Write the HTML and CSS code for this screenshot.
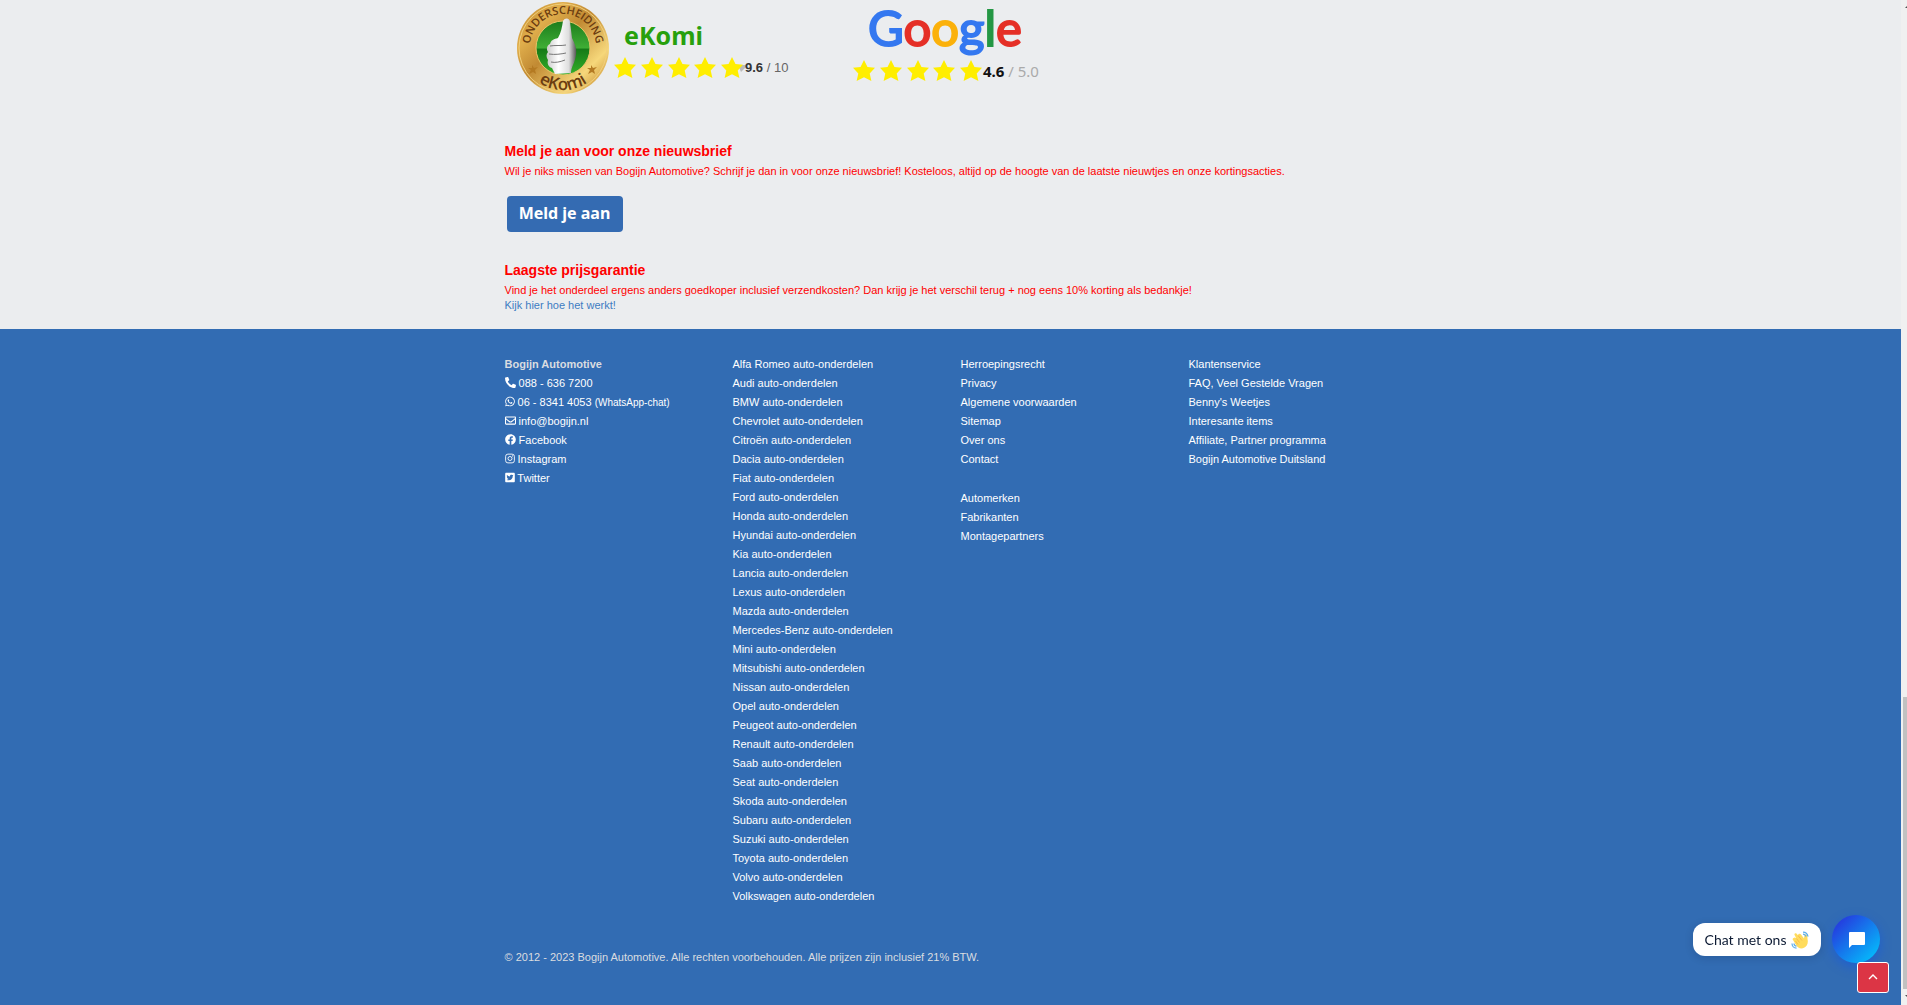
FILE: index.html
```html
<!DOCTYPE html>
<html lang="nl">
<head>
<meta charset="utf-8">
<title>Bogijn Automotive</title>
<link rel="stylesheet" href="styles.css">
</head>
<body>
<svg class="defs" aria-hidden="true">
  <defs>
    <g id="stars" fill="#ffee00">
      <path id="star" d="M11 0l3.500 7 7.500.800-5.300 5.600 1.700 7.600-7.400-3.700-7.400 3.700 1.700-7.600L0 7.800l7.500-.8z"/>
      <use href="#star" x="27"/><use href="#star" x="54"/><use href="#star" x="80"/><use href="#star" x="107"/>
    </g>
  </defs>
</svg>
<div class="page">
  <main class="intro container">
    <div class="ratings">
      <svg class="rating" width="300" height="100" viewBox="0 0 300 100" role="img" aria-label="eKomi 9.6 / 10">
        <defs>
          <linearGradient id="gold" x1="0" y1="0" x2="1" y2="1">
            <stop offset="0" stop-color="#b98228"/><stop offset=".25" stop-color="#e0ae4c"/><stop offset=".45" stop-color="#c18a33"/><stop offset=".75" stop-color="#f6d77a"/><stop offset="1" stop-color="#b9771c"/>
          </linearGradient>
          <linearGradient id="green" x1="0" y1="0" x2="0" y2="1">
            <stop offset="0" stop-color="#1c7c1c"/><stop offset=".5" stop-color="#3fae35"/><stop offset=".52" stop-color="#157a17"/><stop offset="1" stop-color="#34b02a"/>
          </linearGradient>
          <linearGradient id="hand" x1="0" y1="0" x2="1" y2="0">
            <stop offset="0" stop-color="#c9c9c9"/><stop offset=".4" stop-color="#fff"/><stop offset=".75" stop-color="#ddd"/><stop offset="1" stop-color="#555"/>
          </linearGradient>
          <path id="arc-top" d="M25 47A33 33 0 0 1 91 47"/>
          <path id="arc-bottom" d="M15 47A43 43 0 0 0 101 47"/>
        </defs>
        <circle cx="58" cy="48" r="46" fill="url(#gold)"/>
        <circle cx="58" cy="48" r="44" fill="none" stroke="#f1cf7c"/>
        <circle cx="58" cy="48" r="27" fill="url(#green)" stroke="#e9c468"/>
        <path d="M53 38c3-5 4-11 5-17 2-4 7-3 7 1l2 16c3 6 5 11 4 17-1 8-5 12-5 18l-16 1-3-6c-4-1-5-5-4-8-2-3-2-6 0-8-2-3-1-7 2-8 1-4 4-5 8-6z" fill="url(#hand)"/>
        <path d="M45 46c5-1 11 0 16-1M44 54c6 1 12 0 17-1M46 62c4 1 9 0 14-2" fill="none" stroke="#777"/>
        <text class="seal-text" font-size="11" text-anchor="middle"><textPath href="#arc-top" startOffset="50%">ONDERSCHEIDING</textPath></text>
        <text class="seal-text" font-size="17" text-anchor="middle"><textPath href="#arc-bottom" startOffset="50%">eKomi</textPath></text>
        <path d="M27 65l2 3 4-1-3 3 1 4-3-2-4 2 2-4-3-2h4zM86 65l2 3 4-1-3 3 1 4-3-2-4 2 2-4-3-2h4z" fill="#b47a22"/>
        <text class="ekomi" x="119" y="45">eKomi</text>
        <path d="M233 65h10l-7 7z" fill="#bbb"/>
        <use href="#stars" x="109" y="57"/>
        <text class="score" x="240" y="72"><tspan class="strong">9.6</tspan> / 10</text>
      </svg>
      <svg class="rating" width="220" height="100" viewBox="0 0 220 100" role="img" aria-label="Google 4.6 / 5.0">
        <text class="google" x="27" y="46"><tspan class="blue">G</tspan><tspan class="red">o</tspan><tspan class="yellow">o</tspan><tspan class="blue">g</tspan><tspan class="green">l</tspan><tspan class="red">e</tspan></text>
        <path d="M130 68h9l-7 7z" fill="#bbb"/>
        <use href="#stars" x="12" y="60"/>
        <text class="score-google" x="142" y="77"><tspan class="strong">4.6</tspan> / 5.0</text>
      </svg>
    </div>
    <section class="promo">
      <h2>Meld je aan voor onze nieuwsbrief</h2>
      <p>Wil je niks missen van Bogijn Automotive? Schrijf je dan in voor onze nieuwsbrief! Kosteloos, altijd op de hoogte van de laatste nieuwtjes en onze kortingsacties.</p>
      <button class="signup" type="button">Meld je aan</button>
    </section>
    <section class="promo">
      <h2>Laagste prijsgarantie</h2>
      <p>Vind je het onderdeel ergens anders goedkoper inclusief verzendkosten? Dan krijg je het verschil terug + nog eens 10% korting als bedankje!</p>
      <a class="how" href="#">Kijk hier hoe het werkt!</a>
    </section>
  </main>
  <footer class="footer">
    <div class="container">
      <div class="columns">
        <ul>
          <li class="brand">Bogijn Automotive</li>
          <li><a href="#"><svg class="icon wide" viewBox="0 0 512 512"><path d="M493 25l-104-24c-11-3-23 3-27 14l-48 112c-4 10-1 22 7 28l61 50c-36 76-98 140-177 177l-50-61c-7-8-18-11-28-7L15 362c-11 5-17 16-14 27l24 104c2 11 12 19 23 19 256 0 464-207 464-464 0-11-8-21-19-23z" transform="matrix(-1 0 0 1 512 0)"/></svg> 088 - 636 7200</a></li>
          <li><a href="#"><svg class="icon" viewBox="0 0 448 512"><path d="M381 97C339 55 283 32 224 32 102 32 2 131 2 254c0 39 10 77 30 111L0 480l118-31c32 18 69 27 106 27 122 0 224-99 224-222 0-59-25-115-67-157zM224 439c-33 0-66-9-94-26l-7-4-70 18 19-68-4-7c-19-29-29-63-29-98C39 152 122 69 224 69c49 0 96 19 130 54 35 35 57 81 56 131 0 102-84 185-186 185zm101-138c-6-3-33-16-38-18s-9-3-12 2c-4 6-15 19-18 22-3 4-6 4-12 2-33-17-54-30-76-67-6-10 6-9 16-31 2-4 1-7 0-9-1-3-12-31-17-42-5-10-9-9-12-9h-11c-4 0-10 1-15 7s-19 19-19 46 20 54 22 58c3 3 39 60 95 84 35 15 49 17 67 14 10-2 32-14 37-26 5-13 5-24 3-26-1-3-5-4-10-7z"/></svg> 06 - 8341 4053 <small>(WhatsApp-chat)</small></a></li>
          <li><a href="#"><svg class="icon wide" viewBox="0 0 512 512"><path d="M464 64H48C22 64 0 86 0 112v288c0 26 22 48 48 48h416c26 0 48-22 48-48V112c0-26-22-48-48-48zm0 48v41c-22 18-58 47-134 106-17 13-50 45-74 45s-57-32-74-45C106 200 70 171 48 153v-41zM48 400V214c23 18 55 44 105 83 22 17 60 55 103 55s80-37 103-55c50-39 82-65 105-83v186z"/></svg> info@bogijn.nl</a></li>
          <li><a href="#"><svg class="icon wide" viewBox="0 0 512 512"><path d="M504 256C504 119 393 8 256 8S8 119 8 256c0 124 91 226 209 245V328h-63v-72h63v-55c0-62 37-96 94-96 27 0 55 4 55 4v62h-31c-31 0-40 19-40 38v47h69l-11 72h-58v173c118-19 209-121 209-245z"/></svg> Facebook</a></li>
          <li><a href="#"><svg class="icon" viewBox="0 0 448 512"><g fill="none" stroke="currentColor" stroke-width="42"><rect x="21" y="53" width="406" height="406" rx="105"/><circle cx="224" cy="256" r="94"/></g><circle cx="343" cy="137" r="27"/></svg> Instagram</a></li>
          <li><a href="#"><svg class="icon" viewBox="0 0 448 512"><path fill-rule="evenodd" d="M400 32H48C22 32 0 54 0 80v352c0 26 22 48 48 48h352c26 0 48-22 48-48V80c0-26-22-48-48-48zm-49 159v8c0 87-66 187-187 187-37 0-72-11-101-29 36 4 71-7 97-28-29-1-53-20-61-46 10 1 20 1 30-1-31-6-53-33-53-66 9 5 19 8 30 9-30-21-38-59-21-89 33 40 81 66 136 69-9-45 25-81 64-81 19 0 36 8 48 21 15-3 29-8 42-16-5 15-16 29-29 36 13-1 26-5 38-10-9 13-20 25-33 34z"/></svg> Twitter</a></li>
        </ul>
        <ul>
          <li><a href="#">Alfa Romeo auto-onderdelen</a></li>
          <li><a href="#">Audi auto-onderdelen</a></li>
          <li><a href="#">BMW auto-onderdelen</a></li>
          <li><a href="#">Chevrolet auto-onderdelen</a></li>
          <li><a href="#">Citroën auto-onderdelen</a></li>
          <li><a href="#">Dacia auto-onderdelen</a></li>
          <li><a href="#">Fiat auto-onderdelen</a></li>
          <li><a href="#">Ford auto-onderdelen</a></li>
          <li><a href="#">Honda auto-onderdelen</a></li>
          <li><a href="#">Hyundai auto-onderdelen</a></li>
          <li><a href="#">Kia auto-onderdelen</a></li>
          <li><a href="#">Lancia auto-onderdelen</a></li>
          <li><a href="#">Lexus auto-onderdelen</a></li>
          <li><a href="#">Mazda auto-onderdelen</a></li>
          <li><a href="#">Mercedes-Benz auto-onderdelen</a></li>
          <li><a href="#">Mini auto-onderdelen</a></li>
          <li><a href="#">Mitsubishi auto-onderdelen</a></li>
          <li><a href="#">Nissan auto-onderdelen</a></li>
          <li><a href="#">Opel auto-onderdelen</a></li>
          <li><a href="#">Peugeot auto-onderdelen</a></li>
          <li><a href="#">Renault auto-onderdelen</a></li>
          <li><a href="#">Saab auto-onderdelen</a></li>
          <li><a href="#">Seat auto-onderdelen</a></li>
          <li><a href="#">Skoda auto-onderdelen</a></li>
          <li><a href="#">Subaru auto-onderdelen</a></li>
          <li><a href="#">Suzuki auto-onderdelen</a></li>
          <li><a href="#">Toyota auto-onderdelen</a></li>
          <li><a href="#">Volvo auto-onderdelen</a></li>
          <li><a href="#">Volkswagen auto-onderdelen</a></li>
        </ul>
        <div>
          <ul>
            <li><a href="#">Herroepingsrecht</a></li>
            <li><a href="#">Privacy</a></li>
            <li><a href="#">Algemene voorwaarden</a></li>
            <li><a href="#">Sitemap</a></li>
            <li><a href="#">Over ons</a></li>
            <li><a href="#">Contact</a></li>
          </ul>
          <ul class="second">
            <li><a href="#">Automerken</a></li>
            <li><a href="#">Fabrikanten</a></li>
            <li><a href="#">Montagepartners</a></li>
          </ul>
        </div>
        <ul>
          <li><a href="#">Klantenservice</a></li>
          <li><a href="#">FAQ, Veel Gestelde Vragen</a></li>
          <li><a href="#">Benny's Weetjes</a></li>
          <li><a href="#">Interesante items</a></li>
          <li><a href="#">Affiliate, Partner programma</a></li>
          <li><a href="#">Bogijn Automotive Duitsland</a></li>
        </ul>
      </div>
      <p class="copyright">© 2012 - 2023 Bogijn Automotive. Alle rechten voorbehouden. Alle prijzen zijn inclusief 21% BTW.</p>
    </div>
  </footer>
</div>
<div class="scrollbar" aria-hidden="true">
  <svg width="6" height="16"><path d="M4 8l2-2v2z" fill="#505050"/></svg>
  <div class="track"><div class="thumb"></div></div>
  <svg width="6" height="16"><path d="M4 6h2v2z" fill="#505050"/></svg>
</div>
<button class="chat-label" type="button">Chat met ons
  <svg width="18" height="18" viewBox="0 0 36 36"><path d="M5 14c2-2 4-1 6 1l-4-7c-1-3 3-5 5-2l2 3c0-4 4-5 6-2l6 8c1-4 0-7 3-8 4-1 4 4 4 9 2 8-1 14-6 17-7 4-13 1-17-5L4 18c-1-1-1-3 1-4z" fill="#ffdc5d"/><path d="M11 15l6 8M14 9l8 10M9 20l5 7" fill="none" stroke="#ef9645" stroke-width="1"/><path d="M24 2c5 0 9 4 10 9M24 6c3 0 5 2 6 5M2 25c0 5 4 9 9 9M6 25c0 3 2 5 5 5" fill="none" stroke="#5dadec" stroke-width="2.500"/></svg>
</button>
<button class="chat-open" type="button" aria-label="Open chat"><svg width="18" height="18" viewBox="0 0 18 18"><path d="M2 1h14a1 1 0 0 1 1 1v11a1 1 0 0 1-1 1H4l-3 3V2a1 1 0 0 1 1-1z" fill="#fff"/></svg></button>
<a class="to-top" href="#" aria-label="Naar boven"><svg width="10" height="8" viewBox="0 0 10 8"><path d="M1 6l4-4 4 4" fill="none" stroke="#fff" stroke-width="1.400"/></svg></a>
</body>
</html>
```
FILE: styles.css
```css
* { box-sizing: border-box; }
body {
  margin: 0;
  min-height: 100vh;
  display: flex;
  background: #ebedef;
  font: 11px/15px "Liberation Sans", Arial, sans-serif;
}
h2, p, ul { margin: 0; padding: 0; }
ul { list-style: none; }
a { color: inherit; text-decoration: none; }
button { border: 0; cursor: pointer; }
.defs { position: absolute; width: 0; height: 0; }
.page { flex: 1; display: flex; flex-direction: column; min-width: 0; }
.container { width: 100%; max-width: 912px; margin: 0 auto; padding: 0 10px; }

.ratings { display: flex; gap: 36px; padding-bottom: 41px; }
.rating { display: block; overflow: visible; }
.seal-text { font-family: "Open Sans", sans-serif; font-weight: 600; fill: #6b3c10; }
.ekomi { font: bold 25px "Noto Sans", sans-serif; fill: #27a00d; }
.score { font: 13px "Liberation Sans", sans-serif; fill: #666; }
.score .strong { font-weight: bold; fill: #333; }
.google { font: 49px Lato, sans-serif; stroke-width: 2px; }
.blue { fill: #3478f0; stroke: #3478f0; }
.red { fill: #e53027; stroke: #e53027; }
.yellow { fill: #fbb10b; stroke: #fbb10b; }
.green { fill: #249744; stroke: #249744; }
.score-google { font: 15px "Noto Sans", sans-serif; fill: #aaa; }
.score-google .strong { font-weight: bold; fill: #111; }

.promo { color: #f00; padding-bottom: 28px; }
.promo:last-child { padding-bottom: 16px; }
.promo h2 { font-size: 14px; line-height: 20px; margin-bottom: 3px; }
.signup {
  display: block;
  width: 116px;
  height: 36px;
  margin: 17px 0 0 2px;
  padding: 0 0 3px;
  border-radius: 4px;
  background: #346bb2;
  color: #fff;
  font: bold 16px "Noto Sans", sans-serif;
}
.how { display: block; color: #3e7cc2; }

.footer { flex: 1; padding: 26px 0 38px; background: #326cb3; color: #fff; line-height: 19px; }
.columns { display: grid; grid-template-columns: repeat(4, 1fr); margin: 0 -10px; }
.columns > * { padding: 0 10px; }
.second { margin-top: 20px; }
.brand { font-weight: bold; color: #dadde0; }
small { font-size: 10px; line-height: 1; }
.icon { width: 10px; height: 11px; vertical-align: -1px; fill: currentColor; }
.icon.wide { width: 11px; }
.copyright { margin-top: 42px; color: #dadde0; }

.scrollbar { width: 6px; height: 100vh; display: flex; flex-direction: column; background: #f0f0f0; }
.track { flex: 1; display: flex; flex-direction: column; justify-content: flex-end; padding-left: 2px; }
.thumb { height: 30%; background: #c1c1c1; }

.chat-label {
  position: fixed;
  right: 86px;
  bottom: 49px;
  width: 128px;
  height: 33px;
  display: flex;
  align-items: center;
  justify-content: center;
  gap: 5px;
  padding: 0;
  border-radius: 12px;
  background: #fff;
  color: #0c1a33;
  font: 14px Lato, sans-serif;
  box-shadow: 0 2px 8px rgba(0, 18, 46, .16);
}
.chat-open {
  position: fixed;
  right: 27px;
  bottom: 42px;
  width: 48px;
  height: 48px;
  display: grid;
  place-items: center;
  padding: 2px 0 0 2px;
  border-radius: 50%;
  background: linear-gradient(135deg, #2a27da, #00ccff);
  box-shadow: 0 4px 12px rgba(0, 77, 255, .4);
}
.to-top {
  position: fixed;
  right: 18px;
  bottom: 12px;
  width: 32px;
  height: 31px;
  display: grid;
  place-items: center;
  padding-bottom: 2px;
  border: 1px solid #fff;
  border-radius: 3px;
  background: #dc3545;
}
```
